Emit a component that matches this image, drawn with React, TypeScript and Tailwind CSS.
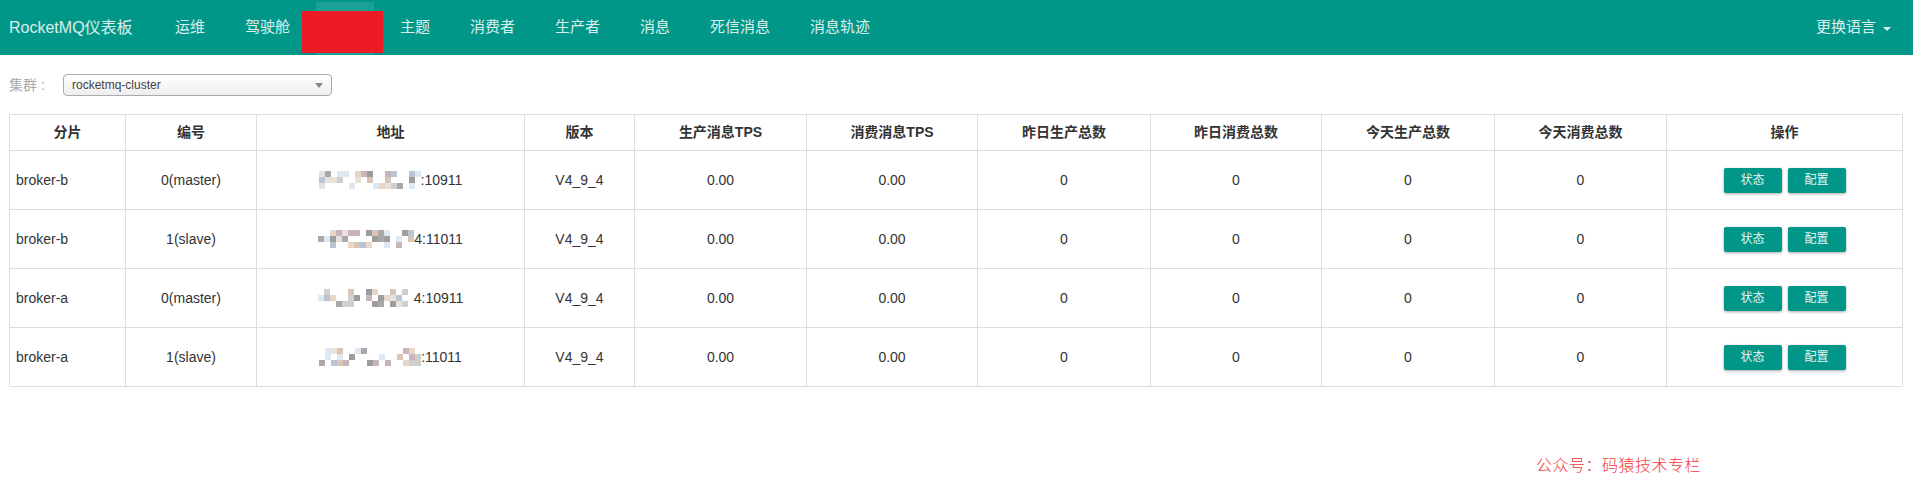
const NAV_ITEMS_LEFT = ["运维", "驾驶舱"];
const NAV_ITEMS_RIGHT = ["主题", "消费者", "生产者", "消息", "死信消息", "消息轨迹"];

const HEADERS = [
  "分片",
  "编号",
  "地址",
  "版本",
  "生产消息TPS",
  "消费消息TPS",
  "昨日生产总数",
  "昨日消费总数",
  "今天生产总数",
  "今天消费总数",
  "操作",
];

const BROKERS = [
  { shard: "broker-b", id: "0(master)", tail: ":10911", seed: 3, cols: 17 },
  { shard: "broker-b", id: "1(slave)", tail: "4:11011", seed: 7, cols: 16 },
  { shard: "broker-a", id: "0(master)", tail: "4:10911", seed: 11, cols: 16 },
  { shard: "broker-a", id: "1(slave)", tail: ":11011", seed: 19, cols: 17 },
];

const MOSAIC_COLORS = ["#d9c4b8", "#c9b4bd", "#dde8f3", "#a9a9a9", "#e8d7c8", "#b9c3d3", "#9d9d9d", "#cfcfcf", "#e9e2dc"];

// masked ip address, drawn as a pixel mosaic
function Mosaic({ seed, cols }: { seed: number; cols: number }) {
  let s = seed * 9301 + 49297;
  const rand = () => {
    s = (s * 9301 + 49297) % 233280;
    return s / 233280;
  };
  const cells: { x: number; y: number; c: string }[] = [];
  for (let cx = 0; cx < cols; cx++) {
    for (let cy = 0; cy < 3; cy++) {
      const r = rand();
      const c = MOSAIC_COLORS[Math.floor(rand() * MOSAIC_COLORS.length)];
      if (r < 0.5) cells.push({ x: cx * 6, y: cy * 6, c });
    }
  }
  return (
    <svg width={cols * 6} height="18" viewBox={`0 0 ${cols * 6} 18`} className="inline-block align-middle" aria-hidden="true">
      {cells.map((cell, i) => (
        <rect key={i} x={cell.x} y={cell.y} width="6" height="6" fill={cell.c} />
      ))}
    </svg>
  );
}

function NavLink({ label }: { label: string }) {
  return <li className="flex items-center px-5 text-[15px] text-white/85 whitespace-nowrap">{label}</li>;
}

export default function App() {
  return (
    <div className="relative min-h-[495px] bg-white font-['Liberation_Sans','Noto_Sans_CJK_SC',sans-serif] text-[#333]">
      <nav className="flex h-[55px] items-stretch bg-[#009688]">
        <div className="flex w-[155px] items-center pl-[9px] text-[16px] text-white/85 whitespace-nowrap">RocketMQ仪表板</div>
        <ul className="flex items-stretch">
          {NAV_ITEMS_LEFT.map((item) => (
            <NavLink key={item} label={item} />
          ))}
          <li className="relative flex w-[70px]">
            <div className="mx-[6px] mt-[2px] flex-1 bg-white/10" />
            <div className="absolute left-[-8px] top-[11px] h-[42px] w-[81px] bg-[#ed1c24]" />
          </li>
          {NAV_ITEMS_RIGHT.map((item) => (
            <NavLink key={item} label={item} />
          ))}
        </ul>
        <div className="ml-auto flex items-center pr-[22px] text-[15px] text-white/85">
          更换语言
          <span className="ml-[7px] mt-[2px] h-0 w-0 border-x-[4px] border-t-[4px] border-x-transparent border-t-white/85" />
        </div>
      </nav>

      <div className="pl-[9px] pr-[11px]">
        <div className="mt-[19px] flex items-center">
          <span className="w-[54px] text-[14px] text-[#aaa]">集群 :</span>
          <div className="flex h-[22px] w-[269px] items-center justify-between rounded-[4px] border border-[#aaa] bg-gradient-to-b from-white to-[#eee] pl-[8px] pr-[8px] text-[12px] text-[#444]">
            <span>rocketmq-cluster</span>
            <span className="h-0 w-0 border-x-[4px] border-t-[5px] border-x-transparent border-t-[#888]" />
          </div>
        </div>

        <table className="mt-[18px] w-[1893px] table-fixed border-collapse border border-[#ddd] text-[14px]">
          <colgroup>
            <col className="w-[116px]" />
            <col className="w-[131px]" />
            <col className="w-[268px]" />
            <col className="w-[110px]" />
            <col className="w-[172px]" />
            <col className="w-[171px]" />
            <col className="w-[173px]" />
            <col className="w-[171px]" />
            <col className="w-[173px]" />
            <col className="w-[172px]" />
            <col className="w-[236px]" />
          </colgroup>
          <thead>
            <tr className="h-[36px]">
              {HEADERS.map((h) => (
                <th key={h} className="border border-[#ddd] text-center font-bold text-[#333]">
                  {h}
                </th>
              ))}
            </tr>
          </thead>
          <tbody>
            {BROKERS.map((b, i) => (
              <tr key={i} className="h-[59px]">
                <td className="border border-[#ddd] pl-[6px] text-left">{b.shard}</td>
                <td className="border border-[#ddd] text-center">{b.id}</td>
                <td className="border border-[#ddd] text-center">
                  <Mosaic seed={b.seed} cols={b.cols} />
                  <span className="align-middle">{b.tail}</span>
                </td>
                <td className="border border-[#ddd] text-center">V4_9_4</td>
                <td className="border border-[#ddd] text-center">0.00</td>
                <td className="border border-[#ddd] text-center">0.00</td>
                <td className="border border-[#ddd] text-center">0</td>
                <td className="border border-[#ddd] text-center">0</td>
                <td className="border border-[#ddd] text-center">0</td>
                <td className="border border-[#ddd] text-center">0</td>
                <td className="border border-[#ddd]">
                  <div className="flex justify-center gap-[6px]">
                    <button
                      type="button"
                      className="h-[25px] w-[58px] rounded-[2px] bg-[#009688] text-[12px] text-white/90 shadow-[0_1px_3px_rgba(0,0,0,0.35)]"
                    >
                      状态
                    </button>
                    <button
                      type="button"
                      className="h-[25px] w-[58px] rounded-[2px] bg-[#009688] text-[12px] text-white/90 shadow-[0_1px_3px_rgba(0,0,0,0.35)]"
                    >
                      配置
                    </button>
                  </div>
                </td>
              </tr>
            ))}
          </tbody>
        </table>
      </div>

      <div className="absolute left-[1536px] top-[452px] text-[16px] tracking-[0.5px] text-[#f03a3a] font-['Noto_Sans_CJK_SC',sans-serif] font-light">
        公众号：码猿技术专栏
      </div>
    </div>
  );
}
